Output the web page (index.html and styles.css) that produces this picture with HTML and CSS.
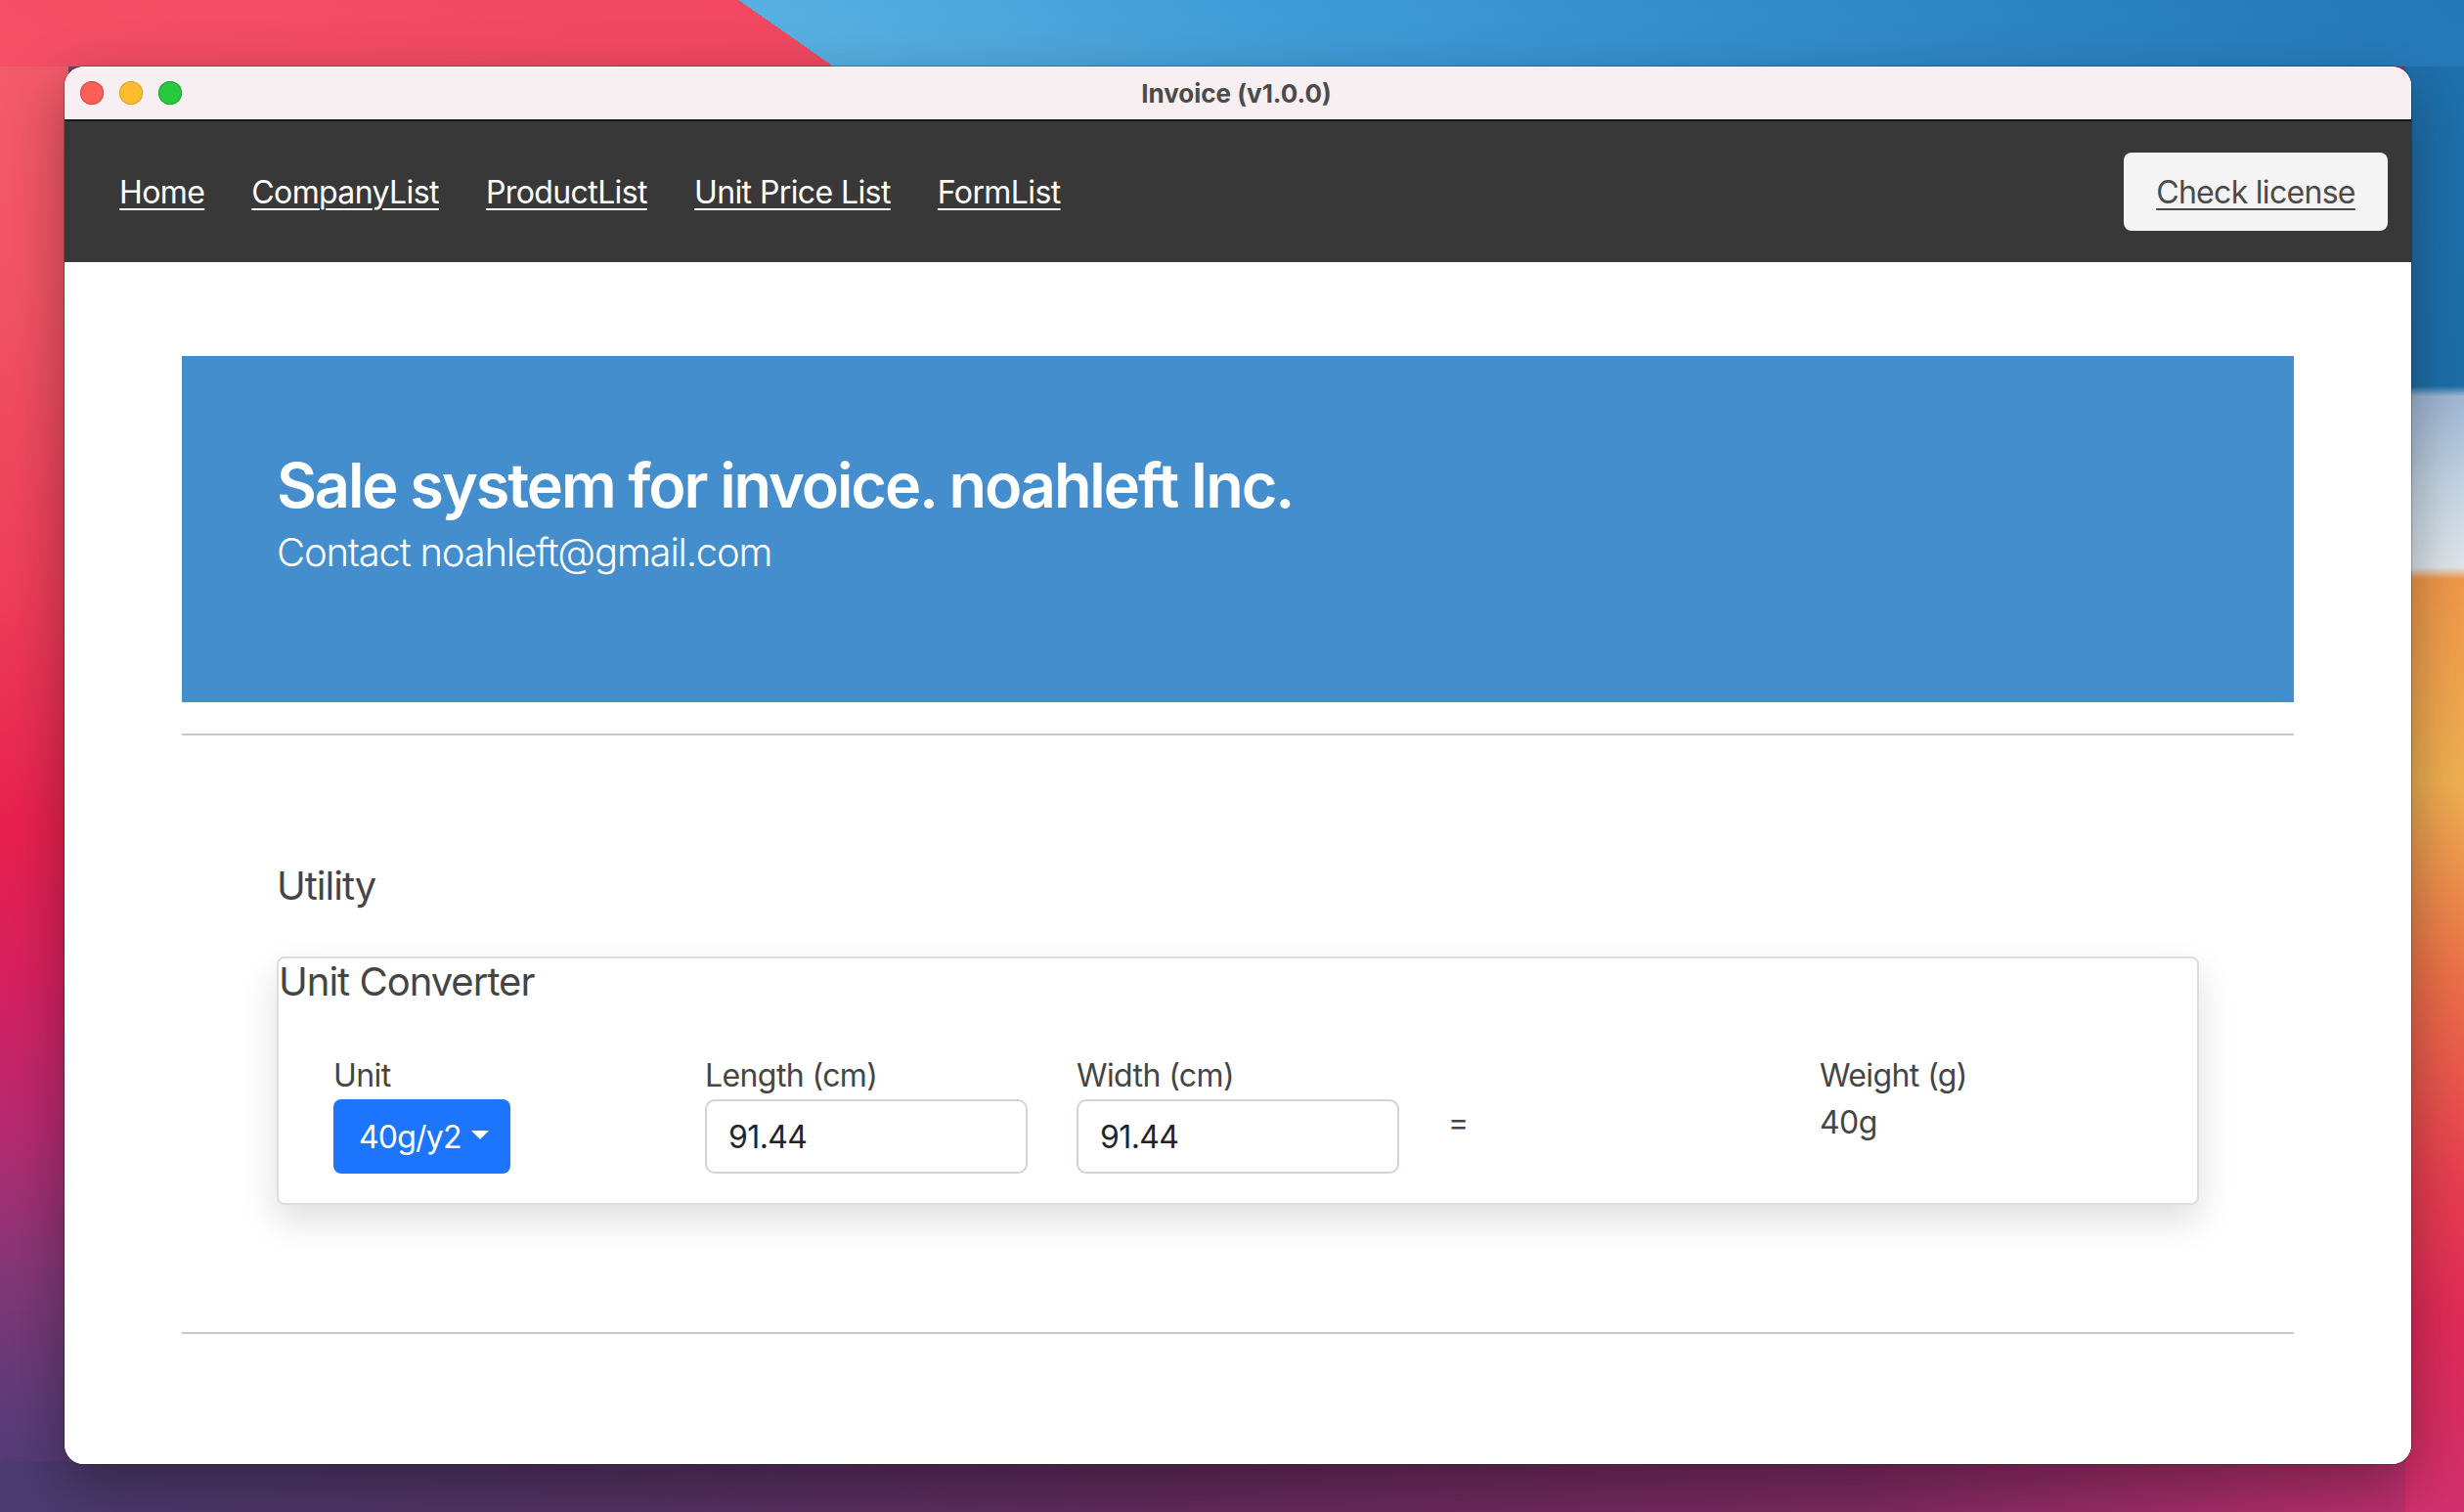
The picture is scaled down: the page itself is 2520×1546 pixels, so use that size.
FILE: index.html
```html
<!DOCTYPE html>
<html lang="en">
<head>
<meta charset="utf-8">
<title>Invoice (v1.0.0)</title>
<link rel="stylesheet" href="styles.css">
</head>
<body>
<div class="window">
  <div class="titlebar">
    <div class="lights">
      <span class="light red"></span>
      <span class="light yellow"></span>
      <span class="light green"></span>
    </div>
    <div class="wtitle">Invoice (v1.0.0)</div>
    <div class="spacer"></div>
  </div>
  <nav class="nav">
    <div class="links">
      <a href="#" class="nav-link">Home</a>
      <a href="#" class="nav-link">CompanyList</a>
      <a href="#" class="nav-link">ProductList</a>
      <a href="#" class="nav-link">Unit Price List</a>
      <a href="#" class="nav-link">FormList</a>
    </div>
    <a href="#" class="license">Check license</a>
  </nav>
  <main class="content">
    <section class="hero">
      <h1 class="hero-title">Sale system for invoice. noahleft Inc.</h1>
      <p class="lead">Contact noahleft@gmail.com</p>
    </section>
    <hr class="rule">
    <section class="utility">
      <h2 class="util-title">Utility</h2>
      <div class="card">
        <h3 class="card-title">Unit Converter</h3>
        <div class="conv-row">
          <div class="field">
            <label class="lbl">Unit</label>
            <button class="dd" type="button">40g/y2<span class="caret"></span></button>
          </div>
          <div class="field">
            <label class="lbl">Length (cm)</label>
            <input class="inp" type="text" value="91.44">
          </div>
          <div class="field">
            <label class="lbl">Width (cm)</label>
            <input class="inp" type="text" value="91.44">
          </div>
          <div class="field eq">=</div>
          <div class="field">
            <div class="lbl">Weight (g)</div>
            <div class="result">40g</div>
          </div>
        </div>
      </div>
    </section>
    <hr class="rule rule-bottom">
  </main>
</div>
</body>
</html>
```

FILE: styles.css
```css
* { box-sizing: border-box; }

html, body {
  margin: 0;
}

body {
  width: 2520px;
  height: 1546px;
  overflow: hidden;
  padding: 68px 0 0 66px;
  font-family: Inter, "Noto Sans", "Liberation Sans", sans-serif;
  background:
    linear-gradient(35deg, #f44f66 0, #f24862 489px, #58b0e2 489px, #3f9bd6 800px, #2f88c6 1150px, #2377b6 1502px) left top / 100% 68px no-repeat,
    linear-gradient(to bottom, #1f70ad 0, #1e6ea8 395px, #9fb6d4 405px, #c6d6e4 500px, #dfe6ec 580px, #f0984a 592px, #efb052 800px, #ec7048 1000px, #e84050 1200px, #e02a58 1350px, #d0306c 1546px) right top / 60px 100% no-repeat,
    linear-gradient(to right, #4b3b70 0, #523262 600px, #622a5c 1200px, #7c2a60 1900px, #c2306e 2520px) left bottom / 100% 52px no-repeat,
    linear-gradient(to bottom, #f55d6b 0, #f25466 300px, #ee3e5a 600px, #e8214f 850px, #d82160 1000px, #b82a70 1150px, #843777 1300px, #5c3c78 1450px, #4b3b70 1546px) left top / 70px 100% no-repeat,
    #7a3a6a;
}

.window {
  width: 2400px;
  height: 1429px;
  border-radius: 20px;
  overflow: hidden;
  background: #ffffff;
  box-shadow: 0 0 0 1px rgba(0, 0, 0, 0.25), 0 20px 60px rgba(0, 0, 0, 0.35);
  display: flex;
  flex-direction: column;
}

/* title bar */
.titlebar {
  height: 56px;
  flex: none;
  background: #f8eff2;
  border-bottom: 2px solid #161616;
  display: grid;
  grid-template-columns: 1fr auto 1fr;
  align-items: center;
  padding: 0 16px;
}

.lights {
  display: flex;
  gap: 16px;
}

.light {
  width: 24px;
  height: 24px;
  border-radius: 50%;
  display: block;
}

.red { background: #fe5f57; box-shadow: inset 0 0 0 1px #e0443e; }
.yellow { background: #febc2e; box-shadow: inset 0 0 0 1px #dea123; }
.green { background: #28c840; box-shadow: inset 0 0 0 1px #1aab29; }

.wtitle {
  font-size: 26px;
  font-weight: 700;
  color: #4b4b4b;
  letter-spacing: 0;
  padding-right: 3px;
}

/* nav */
.nav {
  height: 144px;
  flex: none;
  background: #383838;
  display: flex;
  align-items: center;
  padding: 0 24px 0 56px;
}

.links {
  display: flex;
  gap: 48px;
}

.nav-link {
  color: #ffffff;
  font-size: 32px;
  text-decoration: underline;
  text-decoration-thickness: 2px;
  text-underline-offset: 5px;
  letter-spacing: -0.6px;
}

.license {
  margin-left: auto;
  width: 270px;
  height: 80px;
  border-radius: 8px;
  background: #f4f4f4;
  color: #4a4a4a;
  font-size: 32px;
  letter-spacing: -0.7px;
  display: flex;
  align-items: center;
  justify-content: center;
  text-decoration: underline;
  text-decoration-thickness: 2px;
  text-underline-offset: 5px;
}

/* content */
.content {
  flex: 1;
  background: #ffffff;
}

.hero {
  margin: 96px 120px 0;
  height: 354px;
  padding: 95px 97px 0;
  background: #448ecd;
  color: #ffffff;
}

.hero-title {
  margin: 0;
  font-size: 63px;
  line-height: 1.2;
  font-weight: 600;
  letter-spacing: -2.1px;
}

.lead {
  margin: 0;
  font-size: 40px;
  line-height: 1.5;
  font-weight: 300;
  letter-spacing: -1.2px;
}

.rule {
  margin: 32px 120px 0;
  border: 0;
  height: 2px;
  background: #c8c8c8;
}

.rule-bottom {
  margin-top: 130px;
}

.utility {
  padding: 0 97px;
  margin: 0 120px;
}

.util-title {
  margin: 130px 0 0;
  font-size: 40px;
  line-height: 48px;
  font-weight: 400;
  color: #454545;
  letter-spacing: -1px;
}

.card {
  margin-top: 48px;
  border: 2px solid #dddddd;
  border-radius: 8px;
  box-shadow: 0 16px 36px rgba(0, 0, 0, 0.13);
  padding-bottom: 30px;
  background: #ffffff;
}

.card-title {
  margin: 0;
  font-size: 40px;
  line-height: 48px;
  font-weight: 400;
  color: #454545;
  letter-spacing: -1px;
}

.conv-row {
  margin-top: 48px;
  padding-left: 56px;
  display: grid;
  grid-template-columns: repeat(5, 380px);
}

.field {
  display: flex;
  flex-direction: column;
  align-items: flex-start;
}

.lbl {
  font-size: 32px;
  line-height: 48px;
  color: #454545;
  letter-spacing: -0.6px;
}

.dd {
  height: 76px;
  width: 181px;
  padding: 0 0 0 26px;
  border: 0;
  border-radius: 8px;
  background: #1e75fd;
  color: #ffffff;
  font-family: inherit;
  font-size: 32px;
  letter-spacing: -0.8px;
  display: flex;
  align-items: center;
}

.caret {
  display: inline-block;
  margin-left: 10px;
  width: 0;
  height: 0;
  border-top: 9px solid #ffffff;
  border-left: 9px solid transparent;
  border-right: 9px solid transparent;
  margin-top: -4px;
}

.inp {
  width: 330px;
  height: 76px;
  border: 2px solid #ced4da;
  border-radius: 10px;
  padding: 0 22px;
  font-family: inherit;
  font-size: 32px;
  color: #212529;
  letter-spacing: -0.6px;
  background: #ffffff;
  outline: none;
}

.eq {
  padding-top: 48px;
  font-size: 32px;
  line-height: 48px;
  color: #454545;
}

.result {
  font-size: 32px;
  line-height: 48px;
  color: #454545;
  letter-spacing: -0.6px;
}
```
